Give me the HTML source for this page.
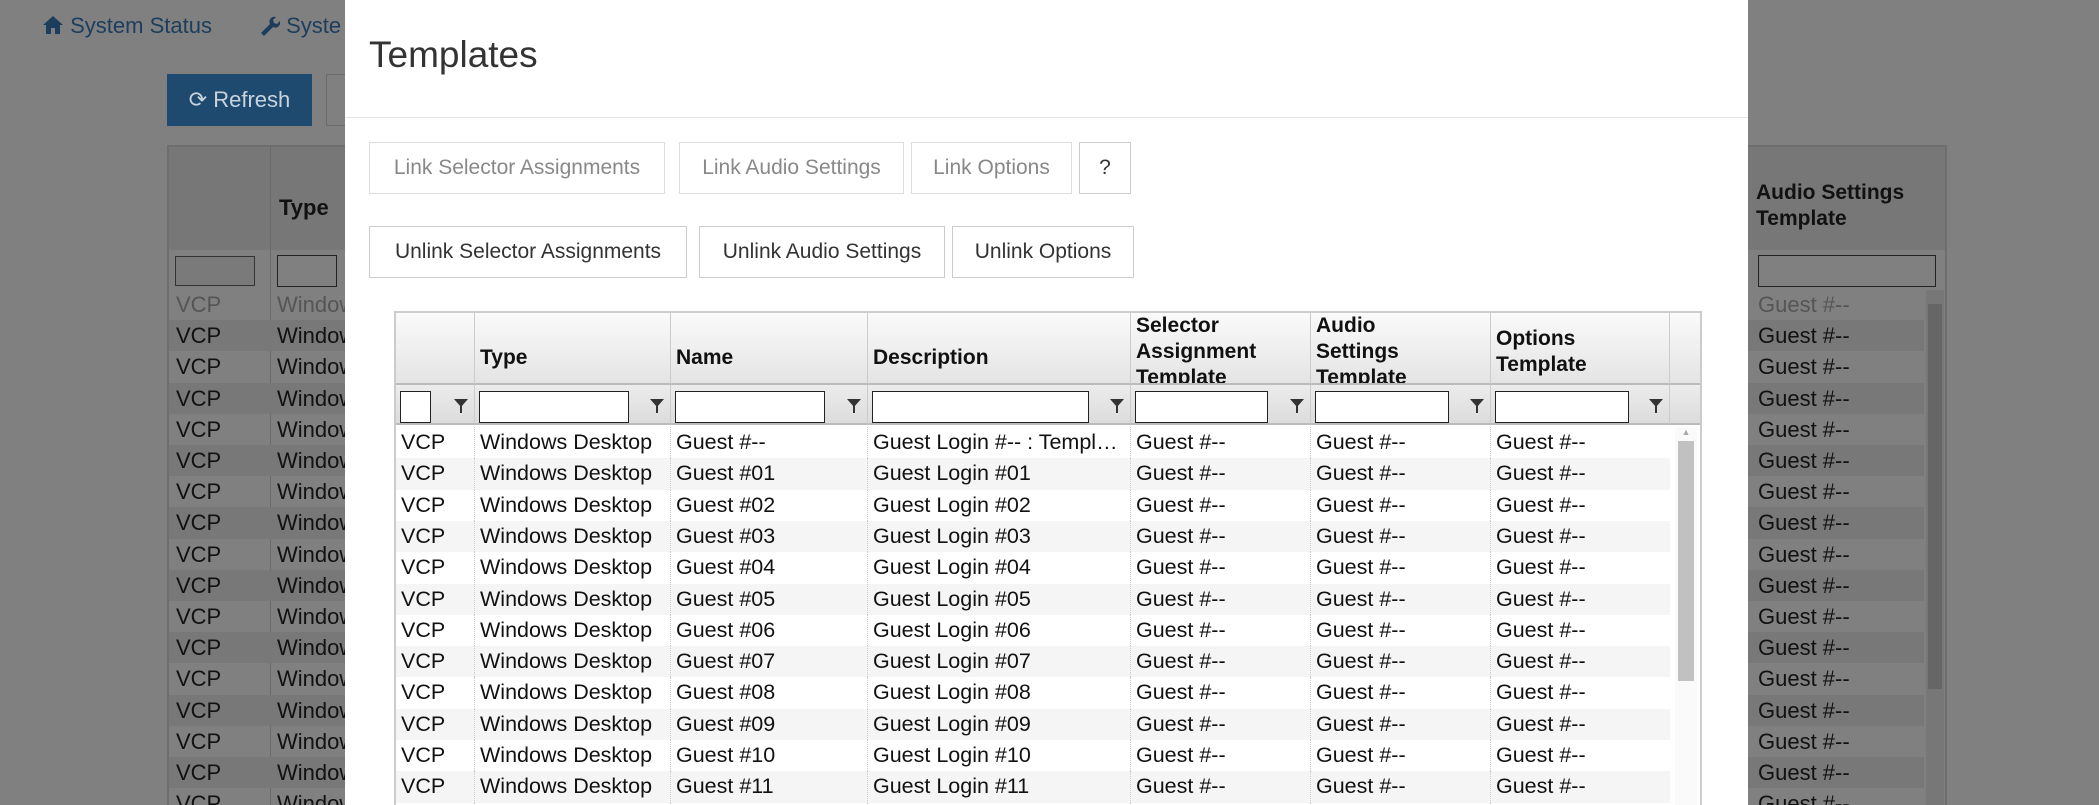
<!DOCTYPE html>
<html style="height:805px;overflow:hidden"><head><meta charset="utf-8">
<style>
*{box-sizing:border-box;margin:0;padding:0}
html,body{width:2099px;height:805px;overflow:hidden}
body{background:#808080;font-family:"Liberation Sans",Arial,sans-serif;position:relative;color:#222}
.a{position:absolute}
.nav{color:#1c3d5c;font-size:22px}
.bgtab{left:167px;top:145px;width:1780px;height:660px;border:2px solid #6e6e6e;border-bottom:0;background:#808080;overflow:hidden}
.bgrow{position:absolute;left:0;width:1755px;height:31.2px;font-size:22px;color:#111;line-height:31px}
.modal{left:345px;top:0;width:1403px;height:805px;background:#fff}
.btn{position:absolute;height:52px;border:1px solid #ccc;background:#fff;font-size:21px;line-height:50px;text-align:center;color:#333}
.btn.dis{color:#888;border-color:#ddd}
.grid{left:394px;top:311px;width:1308px;height:494px;border:2px solid #ccc;border-bottom:0;background:#fff;overflow:hidden}
.hd{position:absolute;top:0;height:72px;background:linear-gradient(#fafafa,#e4e4e4);border-right:1px solid #ccc;border-bottom:2px solid #bbb;font-weight:bold;font-size:21px;line-height:26px;padding-left:5px;overflow:hidden;color:#111}
.fl{position:absolute;top:72px;height:40px;background:linear-gradient(#ececec,#dcdcdc);border-right:1px solid #ccc;border-bottom:2px solid #bbb}
.fl i{position:absolute;left:4px;top:6px;height:32px;border:1.5px solid #222;background:#fff}
.fl b{position:absolute;right:6px;top:14px;width:0;height:0;border-left:7px solid transparent;border-right:7px solid transparent;border-top:8px solid #333}
.fl b:after{content:"";position:absolute;left:-1px;top:-1px;width:2px;height:7px;background:#333}
.row{position:absolute;left:0;width:1274px;height:31.3px;font-size:21.5px;line-height:31px;color:#111}
.row.s{background:#f5f5f5}
.row span{position:absolute;top:0;border-right:1px dotted #ccc;height:100%;padding-left:5px;white-space:nowrap;overflow:hidden}
</style></head><body>
<div class="a nav" style="left:42px;top:13px"><svg width="22" height="20" viewBox="0 0 22 20" style="vertical-align:-2px"><path d="M11 1L1 10h3v9h5v-6h4v6h5v-9h3z" fill="#1c3d5c"/></svg> System Status</div>
<div class="a nav" style="left:258px;top:13px"><svg width="22" height="22" viewBox="0 0 22 22" style="vertical-align:-3px"><path d="M3 19l9-9a5 5 0 016-7l-3 3 1 3 3 1 3-3a5 5 0 01-7 6l-9 9z" fill="#1c3d5c"/></svg> Syste</div>
<div class="a" style="left:167px;top:74px;width:145px;height:52px;background:#1f4a70;color:#c9d3dc;font-size:22px;line-height:52px;text-align:center">⟳ Refresh</div>
<div class="a" style="left:326px;top:74px;width:30px;height:52px;border:1px solid #6a6a6a"></div>
<div class="a bgtab">
 <div class="a" style="left:0;top:0;width:1776px;height:103px;background:#777"></div>
 <div class="a" style="left:101px;top:0;width:1px;height:700px;background:#6a6a6a"></div>
 <div class="a" style="left:110px;top:48px;font-size:22px;font-weight:bold;color:#111">Type</div>
 <div class="a" style="left:1587px;top:33px;font-size:21px;font-weight:bold;color:#111;line-height:26px">Audio Settings<br>Template</div>
 <div class="a" style="left:6px;top:109px;width:80px;height:30px;border:1px solid #333;background:#7a7a7a"></div>
 <div class="a" style="left:108px;top:108px;width:60px;height:32px;border:1.5px solid #222"></div>
 <div class="a" style="left:1589px;top:108px;width:178px;height:32px;border:1.5px solid #222"></div>
 <div class="a" style="left:1757px;top:143px;width:18px;height:560px;background:#777"><div style="margin:14px 2px;height:385px;background:#666"></div></div>
</div>
<div class="a" id="bgr" style="left:169px;top:289px;width:1755px;height:516px;overflow:hidden"></div>

<div class="a modal">
 <div class="a" style="left:24px;top:34px;font-size:37px;color:#333">Templates</div>
 <div class="a" style="left:0;top:117px;width:1403px;height:1px;background:#e5e5e5"></div>
</div>
<div class="btn dis" style="left:369px;top:142px;width:296px">Link Selector Assignments</div>
<div class="btn dis" style="left:679px;top:142px;width:225px">Link Audio Settings</div>
<div class="btn dis" style="left:911px;top:142px;width:161px">Link Options</div>
<div class="btn" style="left:1079px;top:142px;width:52px">?</div>
<div class="btn" style="left:369px;top:226px;width:318px">Unlink Selector Assignments</div>
<div class="btn" style="left:699px;top:226px;width:246px">Unlink Audio Settings</div>
<div class="btn" style="left:952px;top:226px;width:182px">Unlink Options</div>

<div class="a grid">
 <div class="hd" style="left:0;width:79px"></div>
 <div class="hd" style="left:79px;width:196px;padding-top:32px">Type</div>
 <div class="hd" style="left:275px;width:197px;padding-top:32px">Name</div>
 <div class="hd" style="left:472px;width:263px;padding-top:32px">Description</div>
 <div class="hd" style="left:735px;width:180px">Selector<br>Assignment<br>Template</div>
 <div class="hd" style="left:915px;width:180px">Audio<br>Settings<br>Template</div>
 <div class="hd" style="left:1095px;width:179px;padding-top:13px">Options<br>Template</div>
 <div class="hd" style="left:1274px;width:32px;border-right:0"></div>
 <div class="fl" style="left:0;width:79px"><i style="width:31px"></i><b></b></div>
 <div class="fl" style="left:79px;width:196px"><i style="width:150px"></i><b></b></div>
 <div class="fl" style="left:275px;width:197px"><i style="width:150px"></i><b></b></div>
 <div class="fl" style="left:472px;width:263px"><i style="width:217px"></i><b></b></div>
 <div class="fl" style="left:735px;width:180px"><i style="width:133px"></i><b></b></div>
 <div class="fl" style="left:915px;width:180px"><i style="width:134px"></i><b></b></div>
 <div class="fl" style="left:1095px;width:179px"><i style="width:134px"></i><b></b></div>
 <div class="fl" style="left:1274px;width:32px;border-right:0"></div>
 <div id="rows" class="a" style="left:0;top:114px;width:1274px;height:380px;overflow:hidden"></div>
 <div class="a" style="left:1279px;top:114px;width:22px;height:380px;background:#fafafa"><div style="text-align:center;font-size:9px;color:#aaa">▲</div><div style="margin:4px 3px 0;height:240px;background:#c1c1c1"></div></div>
</div>
<script>
var h='';
for(var i=0;i<13;i++){
 var n=i==0?'--':(i<10?'0'+i:''+i);
 var d=i==0?'Guest Login #-- : Templ…':'Guest Login #'+n;
 h+='<div class="row'+(i%2?' s':'')+'" style="top:'+(i*31.3)+'px"><span style="left:0;width:79px">VCP</span><span style="left:79px;width:196px">Windows Desktop</span><span style="left:275px;width:197px">Guest #'+n+'</span><span style="left:472px;width:263px">'+d+'</span><span style="left:735px;width:180px">Guest #--</span><span style="left:915px;width:180px">Guest #--</span><span style="left:1095px;width:179px;border:0">Guest #--</span></div>';
}
document.getElementById('rows').innerHTML=h;
var g='';
for(var j=0;j<17;j++){
 g+='<div class="bgrow" style="top:'+(j*31.2)+'px;'+(j%2?'background:#787878;':'')+(j==0?'color:#555;':'')+'"><span class="a" style="left:7px">VCP</span><span class="a" style="left:108px">Window</span><span class="a" style="left:1589px">Guest #--</span></div>';
}
document.getElementById('bgr').innerHTML=g;
</script>
</body></html>
